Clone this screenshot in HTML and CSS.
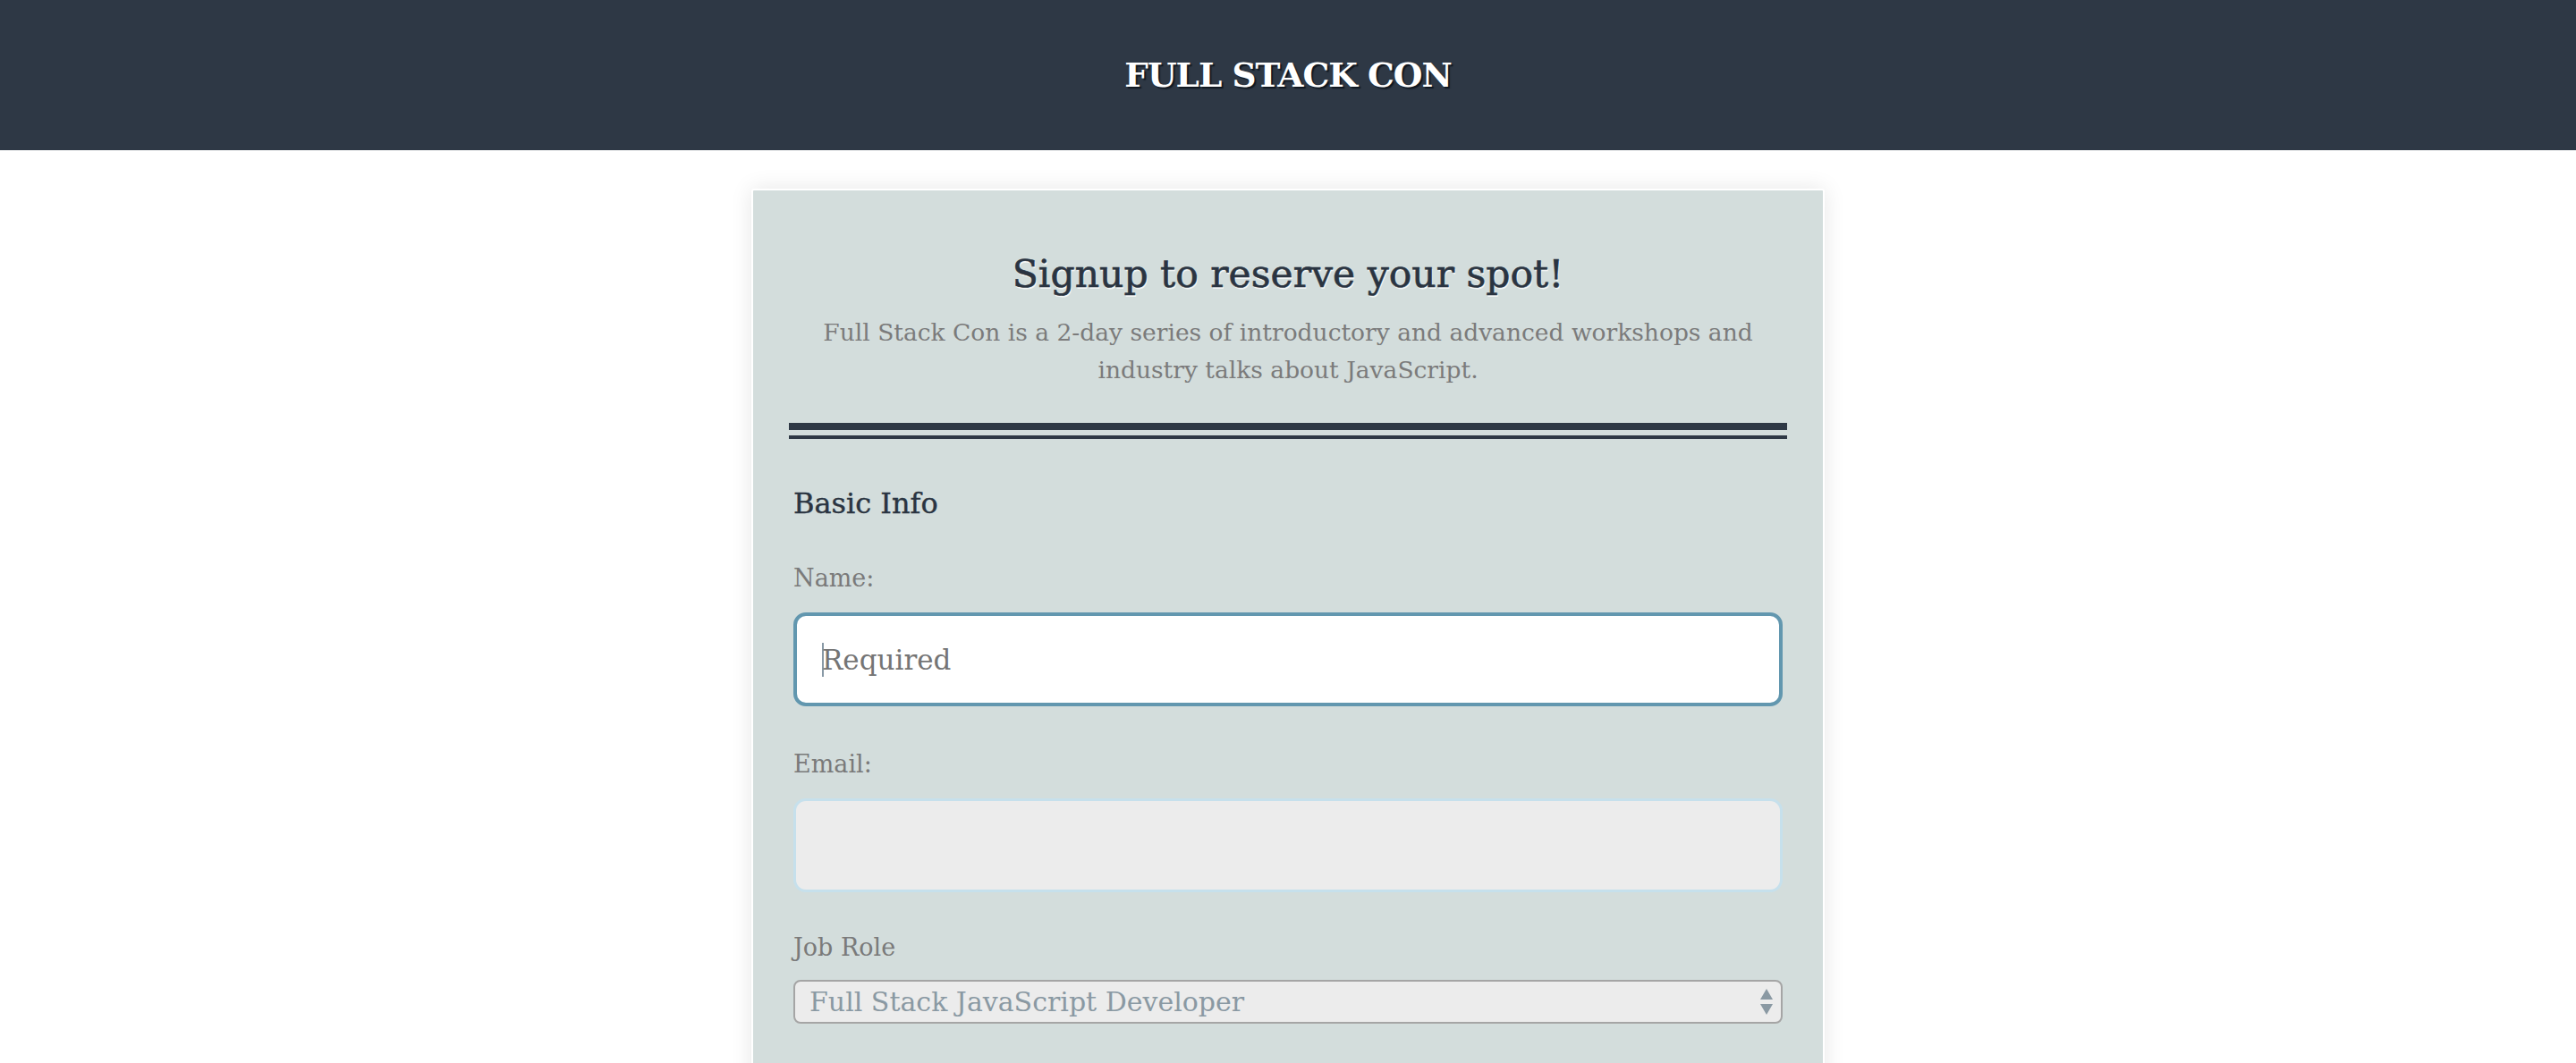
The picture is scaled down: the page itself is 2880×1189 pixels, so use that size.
FILE: index.html
```html
<!DOCTYPE html>
<html lang="en">
<head>
<meta charset="utf-8">
<title>Full Stack Con</title>
<link rel="stylesheet" href="styles.css">
</head>
<body>
<header class="site-header">
  <h1 class="site-title">FULL STACK CON</h1>
</header>
<main class="page">
  <section class="card">
    <div class="intro">
      <h2 class="intro-title">Signup to reserve your spot!</h2>
      <p class="intro-text">Full Stack Con is a 2-day series of introductory and advanced workshops and industry talks about JavaScript.</p>
    </div>
    <div class="divider"><span class="divider-thick"></span><span class="divider-thin"></span></div>
    <form class="form">
      <h3 class="section-title">Basic Info</h3>
      <label class="label" for="name">Name:</label>
      <div class="text-input focused"><span class="caret"></span><span class="placeholder">Required</span></div>
      <label class="label label-email" for="email">Email:</label>
      <div class="text-input"></div>
      <label class="label label-job" for="title">Job Role</label>
      <div class="select">
        <span class="select-value">Full Stack JavaScript Developer</span>
        <svg class="select-arrows" width="16" height="30" viewBox="0 0 16 30"><path d="M8 0 L15 12 L1 12 Z" fill="#8a99a3"/><path d="M1 17 L15 17 L8 29 Z" fill="#8a99a3"/></svg>
      </div>
    </form>
  </section>
</main>
</body>
</html>
```

FILE: styles.css
```css
html, body {
  margin: 0;
  padding: 0;
  background: #ffffff;
}
body {
  font-family: "DejaVu Serif", "Liberation Serif", serif;
  overflow: hidden;
}
.site-header {
  height: 168px;
  background: #2e3845;
  display: flex;
  align-items: center;
  justify-content: center;
}
.site-title {
  margin: 0;
  color: #ffffff;
  font-size: 37.5px;
  font-weight: bold;
  letter-spacing: -1px;
  text-shadow: 2px 2px 1px #111821;
}
.page {
  display: flex;
  justify-content: center;
  padding-top: 43px;
}
.card {
  box-sizing: border-box;
  width: 1200px;
  height: 1100px;
  border: 2px solid #ffffff;
  border-radius: 3px;
  background: #d3dddc;
  box-shadow: 0 0 24px rgba(0,0,0,0.10);
  padding: 0 40px;
}
.intro {
  text-align: center;
  padding-top: 66px;
}
.intro-title {
  margin: 0 0 16px;
  font-size: 42.5px;
  line-height: 56px;
  font-weight: normal;
  color: #2a3441;
  text-shadow: 1px 2px 0 #f2f5f5;
  -webkit-text-stroke: 0.6px #2a3441;
}
.intro-text {
  margin: 0;
  padding: 0 16px;
  font-size: 26.5px;
  line-height: 42px;
  color: #7b7b7b;
}
.divider {
  margin-top: 38px;
  display: flex;
  flex-direction: column;
  gap: 6px;
}
.divider-thick {
  display: block;
  height: 8px;
  background: #2e3845;
}
.divider-thin {
  display: block;
  height: 4px;
  background: #2e3845;
}
.form {
  padding: 50px 5px 0;
  display: flex;
  flex-direction: column;
}
.section-title {
  margin: 0;
  font-size: 32px;
  line-height: 44px;
  font-weight: normal;
  color: #2a3441;
  -webkit-text-stroke: 0.4px #2a3441;
}
.label {
  display: block;
  font-size: 27px;
  line-height: 36px;
  color: #7a7a7a;
  margin-top: 44px;
}
.label-email { margin-top: 47px; }
.label-job { margin-top: 44px; }
.text-input {
  margin-top: 20px;
  height: 105px;
  border: 3px solid #c6e0ec;
  border-radius: 14px;
  background: #ececec;
  box-sizing: border-box;
  display: flex;
  align-items: center;
  padding-left: 28px;
}
.text-input.focused {
  border: 4px solid #6297af;
  background: #ffffff;
}
.caret {
  display: inline-block;
  width: 2px;
  height: 38px;
  background: #8899a6;
  margin-right: -2px;
}
.placeholder {
  font-size: 31px;
  color: #757575;
}
.select {
  position: relative;
  margin-top: 18px;
  height: 49px;
  border: 2px solid #a5a5a5;
  border-radius: 8px;
  background: #ececec;
  box-sizing: border-box;
  display: flex;
  align-items: center;
  padding-left: 16px;
}
.select-value {
  font-size: 30px;
  color: #8a99a3;
}
.select-arrows {
  position: absolute;
  right: 8px;
  top: 8px;
}
```
